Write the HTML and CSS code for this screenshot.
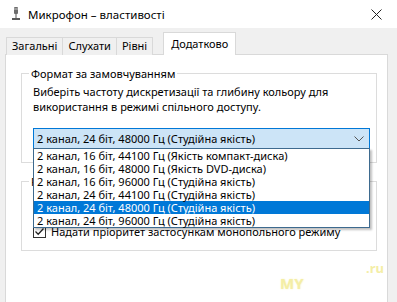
FILE: index.html
```html
<!DOCTYPE html>
<html lang="uk">
<head>
<meta charset="UTF-8">
<title>Микрофон – властивості</title>
<link rel="stylesheet" href="styles.css">
</head>
<body>
<div class="window">
    <div class="titlebar">
        <svg class="mic" width="10" height="14" viewBox="0 0 10 14">
            <rect x="3" y="0" width="4" height="7" rx="1" fill="#6d6d6d"/>
            <rect x="3" y="1" width="4" height="2" fill="#9a9a9a"/>
            <rect x="4.5" y="7" width="1" height="4" fill="#555"/>
            <rect x="1" y="11" width="8" height="2" fill="#5a5a5a"/>
        </svg>
        <span class="title">Микрофон – властивості</span>
        <svg class="close" width="11" height="11" viewBox="0 0 11 11">
            <path d="M0.5 0.5 L10.5 10.5 M10.5 0.5 L0.5 10.5" stroke="#222" stroke-width="1"/>
        </svg>
    </div>

    <div class="tabs">
        <div class="tab">Загальні</div>
        <div class="tab">Слухати</div>
        <div class="tab">Рівні</div>
        <div class="tab active">Додатково</div>
    </div>

    <div class="panel">
        <fieldset class="group">
            <legend>Формат за замовчуванням</legend>
            <p class="hint">Виберіть частоту дискретизації та глибину кольору для використання в режимі спільного доступу.</p>
            <div class="combo">
                <span>2 канал, 24 біт, 48000 Гц (Студійна якість)</span>
                <svg width="10" height="6" viewBox="0 0 10 6">
                    <path d="M0.5 0.5 L5 5 L9.5 0.5" fill="none" stroke="#555" stroke-width="1"/>
                </svg>
                <!-- розкритий список поверх усього -->
                <ul class="droplist">
                    <li>2 канал, 16 біт, 44100 Гц (Якість компакт-диска)</li>
                    <li>2 канал, 16 біт, 48000 Гц (Якість DVD-диска)</li>
                    <li>2 канал, 16 біт, 96000 Гц (Студійна якість)</li>
                    <li>2 канал, 24 біт, 44100 Гц (Студійна якість)</li>
                    <li class="sel">2 канал, 24 біт, 48000 Гц (Студійна якість)</li>
                    <li>2 канал, 24 біт, 96000 Гц (Студійна якість)</li>
                </ul>
            </div>
        </fieldset>

        <fieldset class="group group2">
            <legend>Режим монополії</legend>
            <label class="check"><span class="box"></span>Дозволити програмам монопольно керувати цим пристроєм</label>
            <label class="check">
                <span class="box">
                    <svg width="11" height="11" viewBox="0 0 11 11">
                        <path d="M1.5 5.5 L4.2 8.2 L9.5 2.5" fill="none" stroke="#222" stroke-width="1.3"/>
                    </svg>
                </span>Надати пріоритет застосункам монопольного режиму
            </label>
        </fieldset>

        <div class="mark">
            <span class="ru">.ru</span>
            <span class="my">MY</span>
        </div>
    </div>
</div>
</body>
</html>
```

FILE: styles.css
```css
*{
    box-sizing: border-box;
}
body{
    margin: 0;
    width: 397px;
    height: 302px;
    overflow: hidden;
    background-color: #f0f0f0;
    font-family: "Noto Sans", sans-serif;
    font-size: 11px;
    color: #000;
}
.titlebar{
    height: 28px;
    background-color: #fff;
    display: flex;
    align-items: center;
}
.mic{
    margin-left: 11px;
}
.title{
    margin-left: 7px;
    font-size: 11.5px;
    flex: 1;
}
.close{
    margin-right: 15px;
}
.tabs{
    display: flex;
    align-items: flex-end;
    padding-left: 6px;
    height: 27px;
    margin-bottom: -1px;
}
.tab{
    height: 18px;
    padding: 0 5px;
    line-height: 16px;
    border: 1px solid #d9d9d9;
    border-bottom: none;
    border-right: none;
    background-color: #f0f0f0;
}
.tab:nth-child(3){
    border-right: 1px solid #d9d9d9;
}
.tab.active{
    position: relative; /* лежить поверх рамки панелі */
    z-index: 1;
    height: 23px;
    margin-left: 10px;
    padding: 0 7px 0 7px;
    line-height: 21px;
    background-color: #fff;
    border: 1px solid #d9d9d9;
    border-bottom: none;
}
.panel{
    margin: 0 9px 0 5px;
    height: 260px;
    background-color: #fff;
    border: 1px solid #d9d9d9;
    padding: 11px 10px 0 15px;
}
.group{
    margin: 0;
    border: 1px solid #dcdcdc;
    padding: 3px 6px 13px 11px;
}
.group legend{
    padding: 0 2px;
    margin-left: -4px;
}
.hint{
    margin: 0 0 14px 0;
    line-height: 15px;
}
.combo{
    position: relative;
    height: 21px;
    border: 1px solid #0078d7;
    background-color: #cce4f7;
    display: flex;
    align-items: center;
    justify-content: space-between;
    padding: 0 5px 0 3px;
}
.droplist{
    position: absolute;
    left: -1px;
    right: -1px;
    top: 100%;
    margin: 0;
    padding: 0;
    list-style: none;
    background-color: #fff;
    border: 1px solid #3d6a8f;
    box-shadow: 2px 2px 2px rgba(0,0,0,0.25);
    z-index: 2;
}
.droplist li{
    height: 13px;
    line-height: 13px;
    padding-left: 3px;
}
.droplist li.sel{
    background-color: #0078d7;
    color: #fff;
}
.group2{
    margin-top: 11px;
    padding: 9px 6px 12px 11px;
}
.check{
    display: flex;
    align-items: center;
    height: 14px;
    margin-bottom: 12px;
}
.check:last-child{
    margin-bottom: 0;
}
.box{
    width: 13px;
    height: 13px;
    border: 1px solid #333;
    margin-right: 5px;
    display: flex;
    align-items: center;
    justify-content: center;
}
.mark{
    position: relative;
    height: 50px;
}
.mark .my{
    position: absolute;
    left: 259px;
    top: 22px;
    color: #f4eea6;
    font-weight: bold;
    font-size: 15px;
    text-shadow: 0 0 2px #f8f3c0;
}
.mark .ru{
    position: absolute;
    left: 345px;
    top: 8px;
    color: #f4eea6;
    font-weight: bold;
    font-size: 13px;
}
```
